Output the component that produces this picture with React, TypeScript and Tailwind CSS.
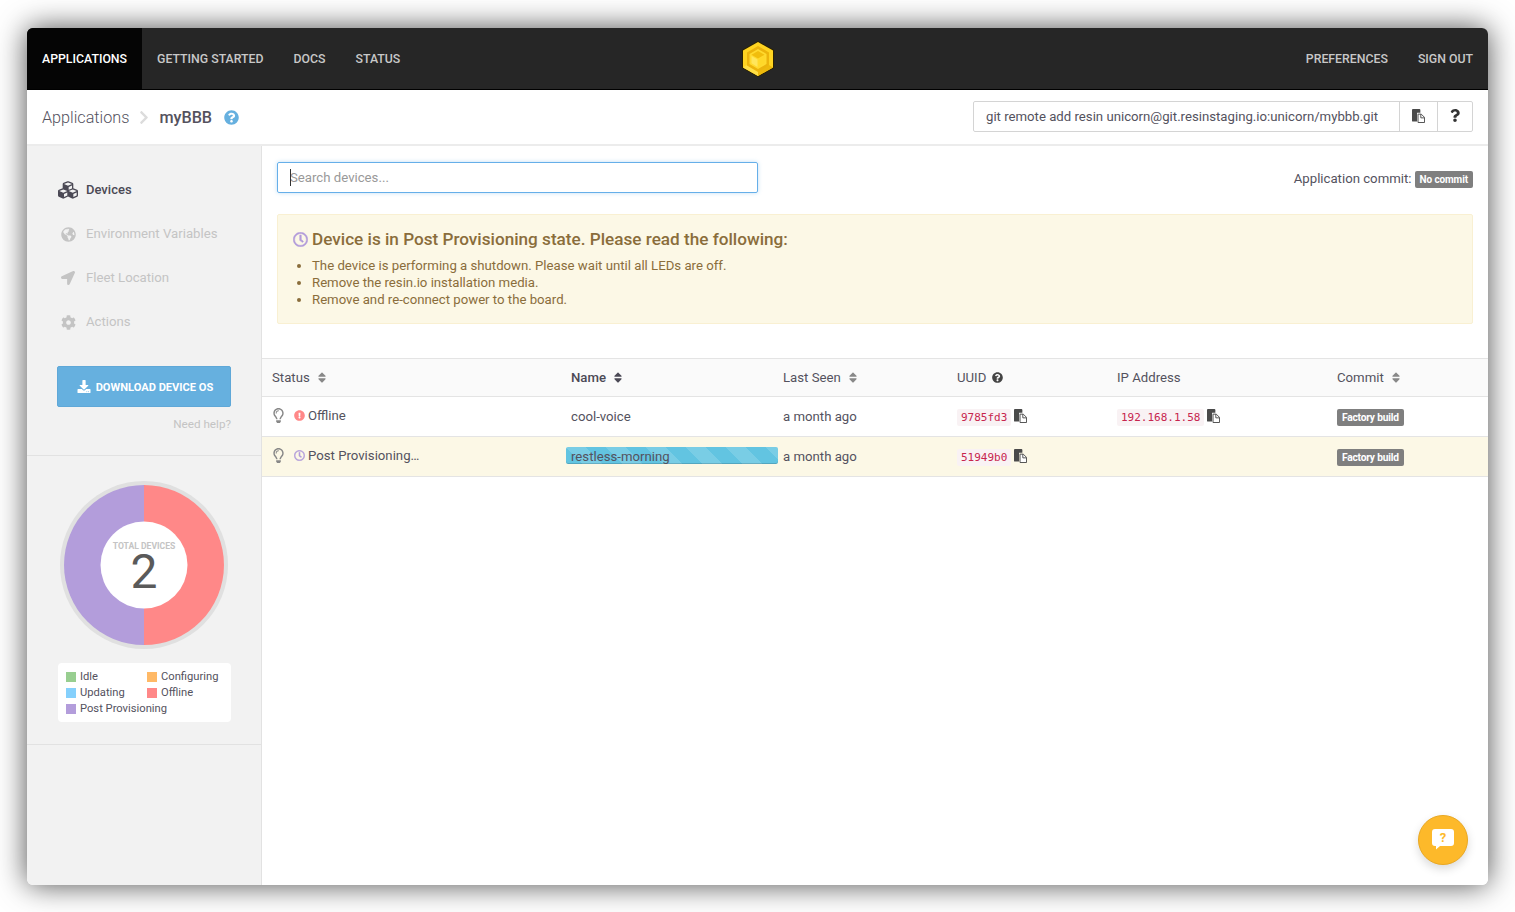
import React from 'react';
import {
    FaCubes,
    FaGlobeAmericas,
    FaLocationArrow,
    FaCog,
    FaDownload,
    FaRegLightbulb,
    FaExclamationCircle,
    FaRegClock,
    FaSort,
    FaQuestionCircle,
    FaQuestion,
    FaChevronRight,
} from 'react-icons/fa';

function CopyIcon({ className = '' }: { className?: string }) {
    return (
        <svg viewBox="0 0 14 15" className={className} fill="none">
            <path d="M0 1a1 1 0 0 1 1-1h7a1 1 0 0 1 1 1v3H5.5v9.5H1a1 1 0 0 1-1-1z" fill="#4a4a4a" />
            <path d="M6.5 5.5h3.5l3.5 3.5v5.5h-7z" fill="#fff" stroke="#4a4a4a" strokeWidth="1" />
            <path d="M9.5 5.5v4h4" fill="none" stroke="#4a4a4a" strokeWidth="1" />
        </svg>
    );
}

function Logo() {
    return (
        <svg viewBox="0 0 32 36" className="w-[32px] h-[36px]">
            <polygon points="16,0 32,9 32,27 16,36 0,27 0,9" fill="#2b2200" />
            <polygon points="16,1 31,9.5 31,26.5 16,35 1,26.5 1,9.5" fill="#ffd421" />
            <polygon points="31,26.5 16,35 16,30 27,24" fill="#eeb90c" />
            <polygon points="1,26.5 16,35 16,30 5,24" fill="#ffdf45" />
            <polygon points="16,5 27,11.5 27,24.5 16,31 5,24.5 5,11.5" fill="#ecb40c" />
            <polygon points="16,8 24.5,13 24.5,23 16,28 7.5,23 7.5,13" fill="#ffd92e" />
            <polygon points="16,10 22.5,13.8 16,17.6 9.5,13.8" fill="#f1bd0d" />
            <polygon points="9.5,15 15.5,18.5 15.5,26 9.5,22.2" fill="#ffe65c" />
            <polygon points="22.5,15 16.5,18.5 16.5,26 22.5,22.2" fill="#ffd829" />
        </svg>
    );
}

function Donut() {
    return (
        <svg viewBox="0 0 170 170" className="w-[170px] h-[170px]">
            <circle cx="85" cy="85" r="84" fill="#e0e0e0" />
            <path d="M85 5a80 80 0 0 1 0 160z" fill="#ff8888" />
            <path d="M85 165a80 80 0 0 1 0-160z" fill="#b39ddb" />
            <circle cx="85" cy="85" r="43.5" fill="#fff" />
        </svg>
    );
}

const navLinks = ['GETTING STARTED', 'DOCS', 'STATUS'];

const sideItems = [
    { label: 'Environment Variables', icon: <FaGlobeAmericas className="w-[15px] h-[15px]" /> },
    { label: 'Fleet Location', icon: <FaLocationArrow className="w-[14px] h-[14px]" /> },
    { label: 'Actions', icon: <FaCog className="w-[15px] h-[15px]" /> },
];

const legend = [
    { label: 'Idle', color: 'bg-[#98ce90]' },
    { label: 'Configuring', color: 'bg-[#ffb966]' },
    { label: 'Updating', color: 'bg-[#85d0fc]' },
    { label: 'Offline', color: 'bg-[#ff8888]' },
    { label: 'Post Provisioning', color: 'bg-[#b39ddb]' },
];

const columns = 'grid grid-cols-[299px_212px_174px_160px_220px_1fr] pl-[10px]';

function FactoryLabel() {
    return (
        <span className="inline-block bg-[#7f7f7f] text-white text-[10.2px] font-bold leading-[17px] h-[17px] px-[5px] rounded-[2px] tracking-[-0.2px]">
            Factory build
        </span>
    );
}

function Code({ children }: { children: React.ReactNode }) {
    return (
        <code className="bg-[#f9f2f4] text-[#c7254e] text-[11px] leading-[17px] px-[4px] rounded-[2px] mt-[1px] [font-family:'DejaVu_Sans_Mono',monospace]">
            {children}
        </code>
    );
}

function SortHead({ label, bold = false }: { label: string; bold?: boolean }) {
    return (
        <div className={`flex items-center gap-[7px] ${bold ? 'font-medium text-[#4b4955] gap-[6px]' : ''}`}>
            {label}
            <FaSort className={`w-[10px] h-[13px] ${bold ? 'text-[#4b4955]' : 'text-[#888]'}`} />
        </div>
    );
}

export default function App() {
    return (
        <div className="w-[1515px] h-[912px] bg-white pl-[27px] pt-[28px] overflow-hidden [font-family:Roboto,sans-serif] text-[13.2px] text-[#54525e]">
            <div className="relative w-[1461px] h-[857px] bg-white rounded-[6px] overflow-hidden shadow-[0_0_30px_rgba(0,0,0,0.7)] flex flex-col">
                {/* top nav */}
                <div className="relative h-[62px] bg-[#262626] border-b border-black flex items-stretch justify-between text-[12.3px] font-medium text-[#c8c8c8] shrink-0">
                    <div className="flex items-stretch">
                        <div className="bg-[#050505] text-white px-[15px] pt-[2px] flex items-center">APPLICATIONS</div>
                        {navLinks.map(link => (
                            <div key={link} className="px-[15px] pt-[2px] flex items-center">{link}</div>
                        ))}
                    </div>
                    <div className="absolute left-[715px] top-[13px]"><Logo /></div>
                    <div className="flex items-stretch">
                        <div className="px-[15px] pt-[2px] flex items-center">PREFERENCES</div>
                        <div className="px-[15px] pt-[2px] flex items-center">SIGN OUT</div>
                    </div>
                </div>

                {/* breadcrumb */}
                <div className="h-[56px] bg-white border-b-2 border-[#ececec] flex items-center justify-between pl-[15px] pr-[15px] shrink-0">
                    <div className="flex items-center pt-[2px]">
                        <span className="text-[16.2px] font-light text-[#54525e]">Applications</span>
                        <FaChevronRight className="w-[12px] h-[15px] text-[#dcdcdc] mx-[9px]" />
                        <span className="text-[16.2px] font-medium text-[#54525e]">myBBB</span>
                        <FaQuestionCircle className="w-[15px] h-[15px] text-[#66b0df] ml-[12px]" />
                    </div>
                    <div className="flex h-[31px] w-[500px] border border-[#d4d4d4] rounded-[2px] text-[13.2px] text-[#54525e] mb-[2px]">
                        <div className="flex-1 flex items-center pl-[12px] pt-[2px] whitespace-nowrap">git remote add resin unicorn@git.resinstaging.io:unicorn/mybbb.git</div>
                        <div className="w-[38px] border-l border-[#d4d4d4] flex items-center justify-center">
                            <CopyIcon className="w-[13px] h-[14px] -mt-[1px]" />
                        </div>
                        <div className="w-[35px] border-l border-[#d4d4d4] flex items-center justify-center">
                            <FaQuestion className="w-[10px] h-[13px] text-[#333] -mt-[1px]" />
                        </div>
                    </div>
                </div>

                <div className="flex flex-1 min-h-0">
                    {/* sidebar */}
                    <div className="w-[235px] bg-[#f2f2f2] border-r border-[#e2e2e2] shrink-0 flex flex-col">
                        <div className="h-[310px] pt-[22px] pl-[30px] pr-[30px] border-b border-[#e2e2e2]">
                            <div className="flex items-center h-[44px] font-medium text-[#4b4955] text-[13px]">
                                <div className="w-[29px]"><FaCubes className="w-[22px] h-[20px]" /></div>
                                Devices
                            </div>
                            {sideItems.map(item => (
                                <div key={item.label} className="flex items-center h-[44px] text-[#c4c4c4]">
                                    <div className="w-[29px] pl-[4px]">{item.icon}</div>
                                    {item.label}
                                </div>
                            ))}
                            <div className="mt-[22px] h-[41px] w-[174px] bg-[#66b0df] border border-[#5fa8d8] rounded-[2px] flex items-center justify-center gap-[5px] pl-[2px] pt-[3px] text-white text-[11.1px] font-bold">
                                <FaDownload className="w-[14px] h-[13px] -mt-[4px]" />
                                DOWNLOAD DEVICE OS
                            </div>
                            <div className="w-[174px] text-right text-[11.7px] text-[#c4c4c4] mt-[9px]">Need help?</div>
                        </div>
                        <div className="h-[289px] border-b border-[#e2e2e2] pl-[30px] pt-[25px]">
                            <div className="relative w-[174px] h-[170px] -mt-[1px] flex justify-center">
                                <Donut />
                                <div className="absolute left-0 right-0 top-[61px] text-center">
                                    <div className="text-[8.6px] font-bold text-[#c4c4c4] leading-[10px]">TOTAL DEVICES</div>
                                    <div className="text-[48px] font-normal text-[#5a5a5a] leading-[36px] mt-[3px]">2</div>
                                </div>
                            </div>
                            <div className="mt-[13px] ml-[1px] w-[173px] h-[59px] bg-white rounded-[4px] pl-[8px] pt-[6px] text-[11.2px] leading-[16px] grid grid-cols-[81px_1fr] content-start">
                                {legend.map(l => (
                                    <div key={l.label} className="flex items-center gap-[4px] whitespace-nowrap">
                                        <span className={`w-[10px] h-[10px] shrink-0 ${l.color}`} />
                                        {l.label}
                                    </div>
                                ))}
                            </div>
                        </div>
                    </div>

                    {/* main */}
                    <div className="flex-1 min-w-0 bg-white">
                        <div className="px-[15px] pt-[16px]">
                            <div className="flex items-start justify-between">
                                <div className="relative">
                                    <input
                                        readOnly
                                        placeholder="Search devices..."
                                        className="w-[481px] h-[31px] border border-[#66afe9] rounded-[2px] px-[12px] text-[13.2px] outline-none placeholder:text-[#999] shadow-[0_0_4px_rgba(102,175,233,0.4)]"
                                    />
                                    <span className="absolute left-[13px] top-[7px] w-px h-[17px] bg-[#333]" />
                                </div>
                                <div className="flex items-start mt-[9px] gap-[3px]">
                                    <span className="leading-[16px]">Application commit:</span>
                                    <span className="bg-[#7f7f7f] text-white text-[10px] font-bold leading-[17px] h-[17px] px-[5px] rounded-[2px] tracking-[-0.1px]">No commit</span>
                                </div>
                            </div>
                            <div className="mt-[21px] h-[110px] bg-[#fcf8e6] border border-[#f9f0d2] rounded-[2px] pl-[15px] pt-[13px] text-[#8a6d3b]">
                                <div className="flex items-center gap-[4px] text-[17.15px] font-medium leading-[22px]">
                                    <FaRegClock stroke="currentColor" strokeWidth={16} className="w-[15px] h-[15px] text-[#b39ddb]" />
                                    Device is in Post Provisioning state. Please read the following:
                                </div>
                                <ul className="mt-[7px] pl-[19px] list-disc text-[13.2px] leading-[17px]">
                                    <li>The device is performing a shutdown. Please wait until all LEDs are off.</li>
                                    <li>Remove the resin.io installation media.</li>
                                    <li>Remove and re-connect power to the board.</li>
                                </ul>
                            </div>
                        </div>

                        {/* devices table */}
                        <div className="mt-[34px]">
                            <div className={`${columns} h-[39px] items-center bg-[#fafafa] border-y border-[#e4e4e4]`}>
                                <SortHead label="Status" />
                                <SortHead label="Name" bold />
                                <SortHead label="Last Seen" />
                                <div className="flex items-center gap-[6px]">UUID <FaQuestionCircle className="w-[11px] h-[11px] text-[#444]" /></div>
                                <div>IP Address</div>
                                <SortHead label="Commit" />
                            </div>
                            <div className={`${columns} h-[40px] items-center border-b border-[#e4e4e4]`}>
                                <div className="flex items-center -mt-[2px]">
                                    <FaRegLightbulb className="w-[11px] h-[15px] ml-[1px] text-[#888]" />
                                    <FaExclamationCircle className="w-[11px] h-[11px] text-[#ff8888] ml-[10px] mr-[3px]" />
                                    Offline
                                </div>
                                <div>cool-voice</div>
                                <div>a month ago</div>
                                <div className="flex items-center gap-[3px]"><Code>9785fd3</Code><CopyIcon className="w-[13px] h-[14px] -mt-[1px]" /></div>
                                <div className="flex items-center gap-[3px]"><Code>192.168.1.58</Code><CopyIcon className="w-[13px] h-[14px] -mt-[1px]" /></div>
                                <div><FactoryLabel /></div>
                            </div>
                            <div className={`${columns} h-[40px] items-center bg-[#fcf8e6] border-b border-[#e4e4e4]`}>
                                <div className="flex items-center -mt-[2px]">
                                    <FaRegLightbulb className="w-[11px] h-[15px] ml-[1px] text-[#888]" />
                                    <FaRegClock stroke="currentColor" strokeWidth={16} className="w-[11px] h-[11px] text-[#b39ddb] ml-[10px] mr-[3px]" />
                                    Post Provisioning…
                                </div>
                                <div className="-ml-[5px] mr-[5px] -mt-[2px] pl-[5px] h-[17px] leading-[19px] rounded-[2px] bg-[#62c4e1] bg-[linear-gradient(45deg,rgba(255,255,255,.15)_25%,transparent_25%,transparent_50%,rgba(255,255,255,.15)_50%,rgba(255,255,255,.15)_75%,transparent_75%,transparent)] bg-[length:40px_40px] shadow-[inset_0_-1px_0_rgba(0,0,0,0.15)]">restless-morning</div>
                                <div>a month ago</div>
                                <div className="flex items-center gap-[3px]"><Code>51949b0</Code><CopyIcon className="w-[13px] h-[14px] -mt-[1px]" /></div>
                                <div />
                                <div><FactoryLabel /></div>
                            </div>
                        </div>
                    </div>
                </div>

                {/* help button */}
                <div className="absolute right-[20px] bottom-[20px] w-[50px] h-[50px] rounded-full bg-[#fdb92a] border border-[#e9a823] shadow-[0_4px_10px_rgba(0,0,0,0.15)] flex items-center justify-center">
                    <div className="relative w-[22px] h-[21px] -mt-[1px]">
                        <svg viewBox="0 0 22 21" className="w-[22px] h-[21px]">
                            <path d="M3 0h16a3 3 0 0 1 3 3v11a3 3 0 0 1-3 3H8l-4 3.5V17H3a3 3 0 0 1-3-3V3a3 3 0 0 1 3-3z" fill="#fff" />
                        </svg>
                        <span className="absolute left-0 right-0 top-0 text-center text-[#fdb92a] text-[13px] font-bold leading-[17px]">?</span>
                    </div>
                </div>
            </div>
        </div>
    );
}
